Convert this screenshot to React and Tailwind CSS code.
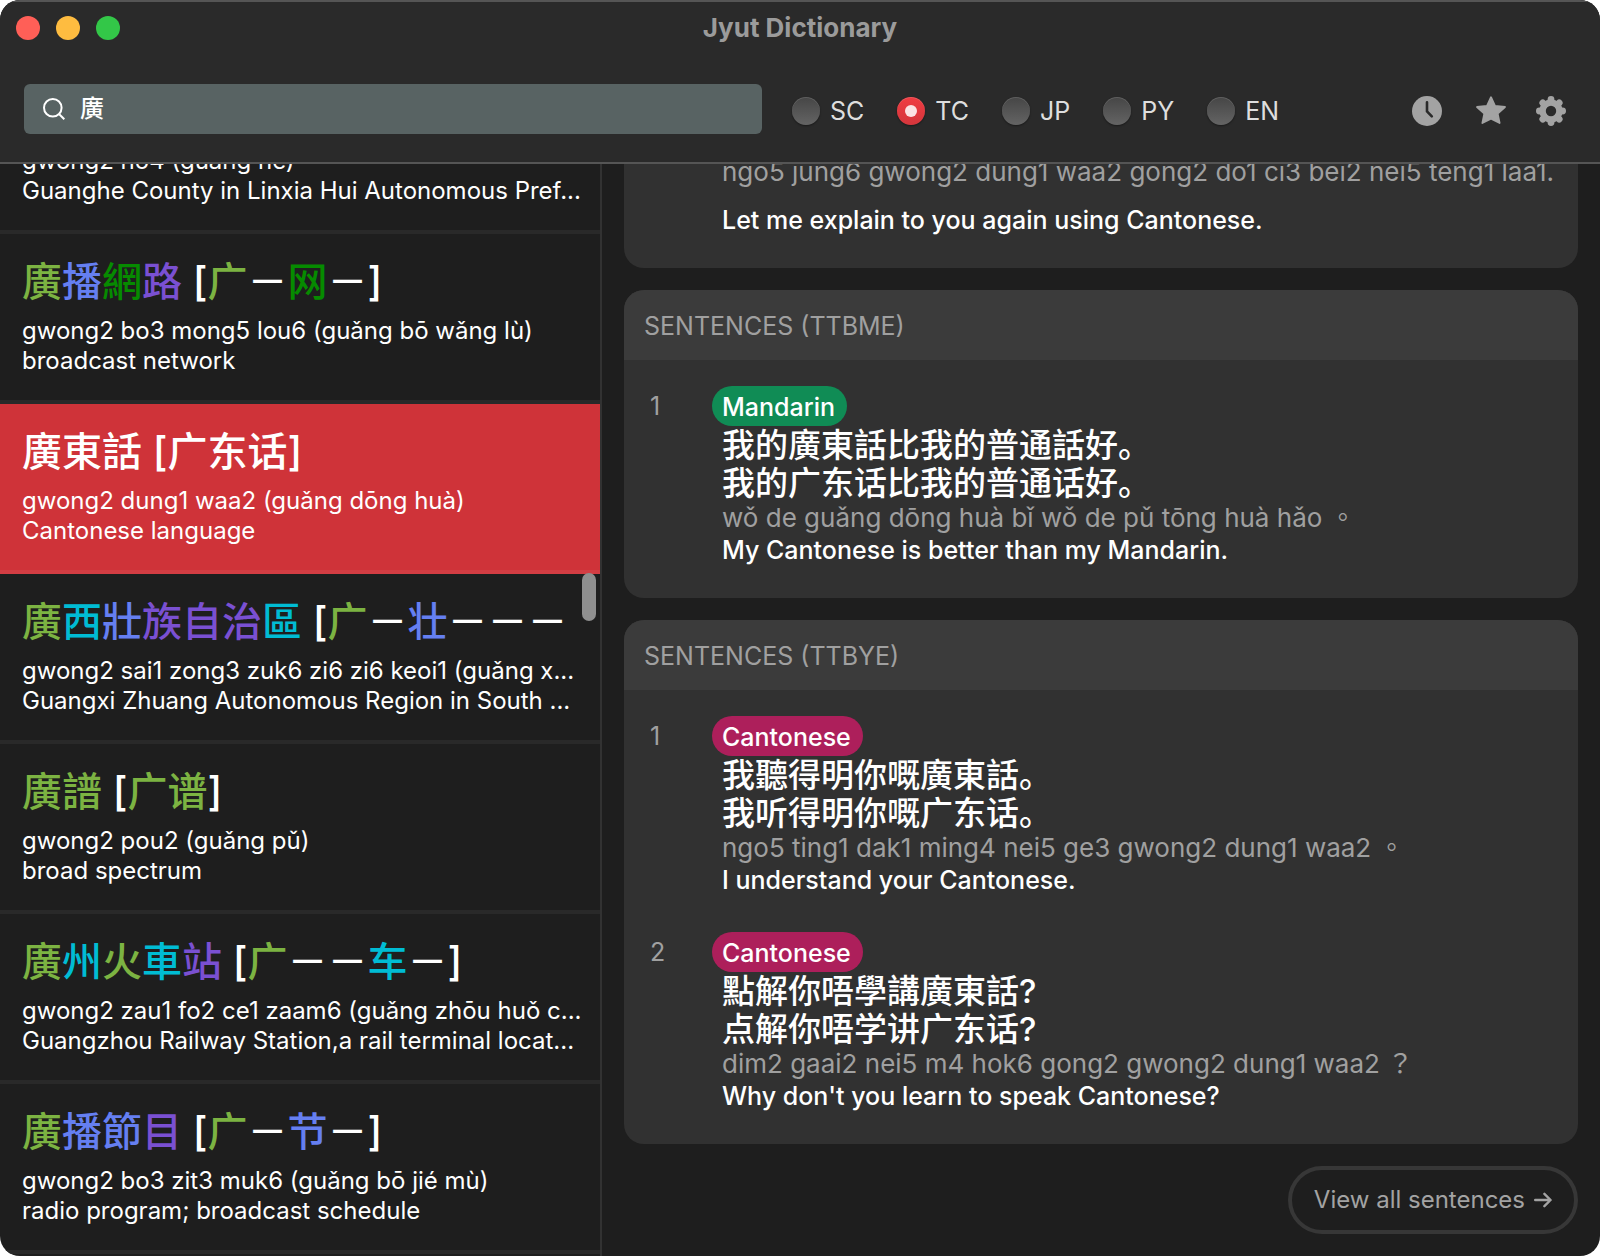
import React from "react";

const TONES = {
  1: "text-[#00bcd4]",
  2: "text-[#7cb342]",
  3: "text-[#657ff1]",
  5: "text-[#068b00]",
  6: "text-[#7a50d2]",
};

// Headwords are lists of [text, tone]; a tone of 0 keeps the default colour.
const ENTRIES = [
  {
    reading: "gwong2 ho4 (guǎng hé)",
    meaning: "Guanghe County in Linxia Hui Autonomous Pref...",
  },
  {
    word: [["廣", 2], ["播", 3], ["網", 5], ["路", 6], [" [", 0], ["广", 2], ["－", 0], ["网", 5], ["－", 0], ["]", 0]],
    reading: "gwong2 bo3 mong5 lou6 (guǎng bō wǎng lù)",
    meaning: "broadcast network",
  },
  {
    word: [["廣東話 [广东话]", 0]],
    reading: "gwong2 dung1 waa2 (guǎng dōng huà)",
    meaning: "Cantonese language",
    selected: true,
  },
  {
    word: [["廣", 2], ["西", 1], ["壯", 3], ["族自治", 6], ["區", 1], [" [", 0], ["广", 2], ["－", 0], ["壮", 3], ["－－－", 0]],
    reading: "gwong2 sai1 zong3 zuk6 zi6 zi6 keoi1 (guǎng x...",
    meaning: "Guangxi Zhuang Autonomous Region in South ...",
  },
  {
    word: [["廣譜", 2], [" [", 0], ["广谱", 2], ["]", 0]],
    reading: "gwong2 pou2 (guǎng pǔ)",
    meaning: "broad spectrum",
  },
  {
    word: [["廣", 2], ["州", 1], ["火", 2], ["車", 1], ["站", 6], [" [", 0], ["广", 2], ["－－", 0], ["车", 1], ["－", 0], ["]", 0]],
    reading: "gwong2 zau1 fo2 ce1 zaam6 (guǎng zhōu huǒ c...",
    meaning: "Guangzhou Railway Station,a rail terminal locat...",
  },
  {
    word: [["廣", 2], ["播節", 3], ["目", 6], [" [", 0], ["广", 2], ["－", 0], ["节", 3], ["－", 0], ["]", 0]],
    reading: "gwong2 bo3 zit3 muk6 (guǎng bō jié mù)",
    meaning: "radio program; broadcast schedule",
  },
];

const SECTIONS = [
  {
    title: "SENTENCES (TTBME)",
    items: [
      {
        language: "Mandarin",
        lines: ["我的廣東話比我的普通話好。", "我的广东话比我的普通话好。"],
        reading: "wǒ de guǎng dōng huà bǐ wǒ de pǔ tōng huà hǎo",
        mark: "。",
        english: "My Cantonese is better than my Mandarin.",
      },
    ],
  },
  {
    title: "SENTENCES (TTBYE)",
    items: [
      {
        language: "Cantonese",
        lines: ["我聽得明你嘅廣東話。", "我听得明你嘅广东话。"],
        reading: "ngo5 ting1 dak1 ming4 nei5 ge3 gwong2 dung1 waa2",
        mark: "。",
        english: "I understand your Cantonese.",
      },
      {
        language: "Cantonese",
        lines: ["點解你唔學講廣東話?", "点解你唔学讲广东话?"],
        reading: "dim2 gaai2 nei5 m4 hok6 gong2 gwong2 dung1 waa2",
        mark: "？",
        english: "Why don't you learn to speak Cantonese?",
      },
    ],
  },
];

const MODES = ["SC", "TC", "JP", "PY", "EN"];

function SearchIcon() {
  return (
    <svg viewBox="0 0 22 22" className="size-[22px] shrink-0" fill="none" stroke="#fff" strokeWidth="2" aria-hidden="true">
      <circle cx="9.8" cy="9.8" r="8.8" />
      <path d="M16 16 21.3 21.3" />
    </svg>
  );
}

function ClockIcon() {
  return (
    <svg viewBox="0 0 30 30" className="size-[30px]" aria-hidden="true">
      <circle cx="15" cy="15" r="15" fill="currentColor" />
      <path d="M15 6.2V15.4L19.8 20.4" fill="none" stroke="#2a2a2a" strokeWidth="2.6" strokeLinecap="round" strokeLinejoin="round" />
    </svg>
  );
}

function StarIcon() {
  return (
    <svg viewBox="0 0 30 30" className="size-[30px]" fill="currentColor" stroke="currentColor" strokeWidth="1.8" strokeLinejoin="round" aria-hidden="true">
      <path d="M15 1.2 19 9.8 29 11 21.7 17.6 23.6 27 15 22.6 6.4 27 8.3 17.6 1 11 11 9.8Z" />
    </svg>
  );
}

function GearIcon() {
  const angles = [0, 45, 90, 135, 180, 225, 270, 315];
  return (
    <svg viewBox="0 0 30 30" className="size-[30px]" fill="currentColor" aria-hidden="true">
      <circle cx="15" cy="15" r="8.4" fill="none" stroke="currentColor" strokeWidth="6.4" />
      {angles.map((a) => (
        <circle key={a} cx="15" cy="3.4" r="3.4" transform={`rotate(${a} 15 15)`} />
      ))}
    </svg>
  );
}

function Header() {
  return (
    <header className="shrink-0 border-y-2 border-[#555] bg-[#2a2a2a]">
      <div className="grid h-[52px] grid-cols-[1fr_auto_1fr] items-center px-4">
        <div className="flex gap-4">
          <button aria-label="Close" className="size-6 rounded-full bg-[#ff5f57]" />
          <button aria-label="Minimise" className="size-6 rounded-full bg-[#febc40]" />
          <button aria-label="Zoom" className="size-6 rounded-full bg-[#33c748]" />
        </div>
        <h1 className="text-[26px] leading-8 font-bold text-[#9b9b9b]">Jyut Dictionary</h1>
      </div>
      <div className="flex h-[108px] items-center pt-[2px] pr-[34px] pl-6">
        <label className="flex h-[50px] flex-1 items-center gap-[15px] rounded-md bg-[#586363] pl-[19px]">
          <SearchIcon />
          <input
            type="text"
            aria-label="Search"
            defaultValue="廣"
            className="min-w-0 flex-1 bg-transparent text-2xl font-medium text-white outline-none"
          />
        </label>
        <fieldset className="ml-[30px] flex gap-[33px] pt-1">
          {MODES.map((mode) => (
            <label key={mode} className="flex items-center gap-[10px] text-[25px] leading-8 text-[#dedede]">
              <input
                type="radio"
                name="mode"
                value={mode}
                defaultChecked={mode === "TC"}
                className="grid size-7 appearance-none place-items-center rounded-full bg-linear-to-b from-[#464646] to-[#646464] shadow-[0_1px_2px_#0006,inset_0_1px_0_#ffffff22] before:hidden before:size-3 before:rounded-full before:bg-[#fbe3e4] checked:from-[#f03c42] checked:to-[#d4363c] checked:before:block"
              />
              {mode}
            </label>
          ))}
        </fieldset>
        <div className="ml-[133px] flex items-center pt-1 text-[#a3a3a3]">
          <button aria-label="History" className="mr-[34px]">
            <ClockIcon />
          </button>
          <button aria-label="Favourites" className="mr-[30px]">
            <StarIcon />
          </button>
          <button aria-label="Settings">
            <GearIcon />
          </button>
        </div>
      </div>
    </header>
  );
}

function Entry({ entry }) {
  return (
    <li
      className={
        entry.selected
          ? "border-b-4 border-[#d33d43] bg-[#cf3339] px-[22px] pb-6"
          : "border-b-4 border-[#292929] px-[22px] pb-6"
      }
    >
      {entry.word && (
        <h2 className="mb-[6px] pt-5 text-[40px] leading-[56px] font-medium whitespace-nowrap">
          {entry.word.map(([text, tone], i) => (
            <span key={i} className={TONES[tone]}>
              {text}
            </span>
          ))}
        </h2>
      )}
      <p className="text-2xl leading-[30px] whitespace-nowrap">{entry.reading}</p>
      <p className="text-2xl leading-[30px] whitespace-nowrap">{entry.meaning}</p>
    </li>
  );
}

function Sentence({ item, number }) {
  const pill =
    item.language === "Mandarin"
      ? "flex h-10 items-center rounded-full bg-[#108c55] pt-[2px] pr-3 pl-[10px] font-medium"
      : "flex h-10 items-center rounded-full bg-[#ad1f5b] pt-[2px] pr-3 pl-[10px] font-medium";
  return (
    <li className="flex text-[25px] leading-8">
      <span className="w-[62px] pt-1 text-[#a0a0a0]">{number}</span>
      <div>
        <div className="flex">
          <span className={pill}>{item.language}</span>
        </div>
        <div className="pl-[10px]">
          {item.lines.map((line) => (
            <p key={line} className="text-[33px] leading-[38px] font-medium">
              {line}
            </p>
          ))}
          <p className="text-[26px] leading-8 text-[#a0a0a0]">
            {item.reading} <span className="font-['Noto_Sans_CJK_TC',sans-serif] leading-none">{item.mark}</span>
          </p>
          <p className="font-medium">{item.english}</p>
        </div>
      </div>
    </li>
  );
}

function Section({ section }) {
  return (
    <section className="overflow-hidden rounded-[20px] bg-[#313131]">
      <h2 className="flex h-[70px] items-center bg-[#3b3b3b] px-5 pt-1 text-[25px] text-[#a0a0a0]">{section.title}</h2>
      <ol className="flex flex-col gap-9 pt-[26px] pr-5 pb-8 pl-[26px]">
        {section.items.map((item, i) => (
          <Sentence key={i} item={item} number={i + 1} />
        ))}
      </ol>
    </section>
  );
}

export default function App() {
  return (
    <div className="flex h-screen flex-col overflow-hidden rounded-[20px] bg-[#1e1e1e] font-['Inter','Noto_Sans_CJK_SC',sans-serif] text-white">
      <Header />
      <main className="flex min-h-0 flex-1">
        <nav aria-label="Results" className="relative flex w-3/8 shrink-0">
          <div className="flex min-w-0 flex-1 flex-col-reverse overflow-y-auto [scrollbar-width:none]">
            <ul className="pb-[2px]">
              {ENTRIES.map((entry) => (
                <Entry key={entry.reading} entry={entry} />
              ))}
            </ul>
          </div>
          <div className="absolute top-[409px] right-1 h-12 w-[14px] rounded-full bg-[#8f8f8f]" />
        </nav>
        <div className="flex min-w-0 flex-1 flex-col-reverse overflow-y-auto border-l-2 border-[#323232] px-[22px] [scrollbar-width:none]">
          <div className="flex flex-col gap-[22px] pb-[22px]">
            <section className="rounded-b-[20px] bg-[#313131] pr-5 pb-8 pl-[98px] text-[25px] leading-8">
              <p className="mb-4 text-[26px] leading-8 whitespace-nowrap text-[#a0a0a0]">
                ngo5 jung6 gwong2 dung1 waa2 gong2 do1 ci3 bei2 nei5 teng1 laa1.
              </p>
              <p className="font-medium">Let me explain to you again using Cantonese.</p>
            </section>
            {SECTIONS.map((section) => (
              <Section key={section.title} section={section} />
            ))}
            <button className="flex h-[68px] items-center gap-[9px] self-end rounded-full border-4 border-[#373737] px-[22px] text-2xl text-[#a3a3a3]">
              View all sentences
              <svg viewBox="0 0 18 16" className="h-4 w-[18px]" fill="none" stroke="currentColor" strokeWidth="2.4" strokeLinecap="round" strokeLinejoin="round" aria-hidden="true">
                <path d="M1.2 8H16.4M10.4 1.8 16.6 8 10.4 14.2" />
              </svg>
            </button>
          </div>
        </div>
      </main>
    </div>
  );
}
